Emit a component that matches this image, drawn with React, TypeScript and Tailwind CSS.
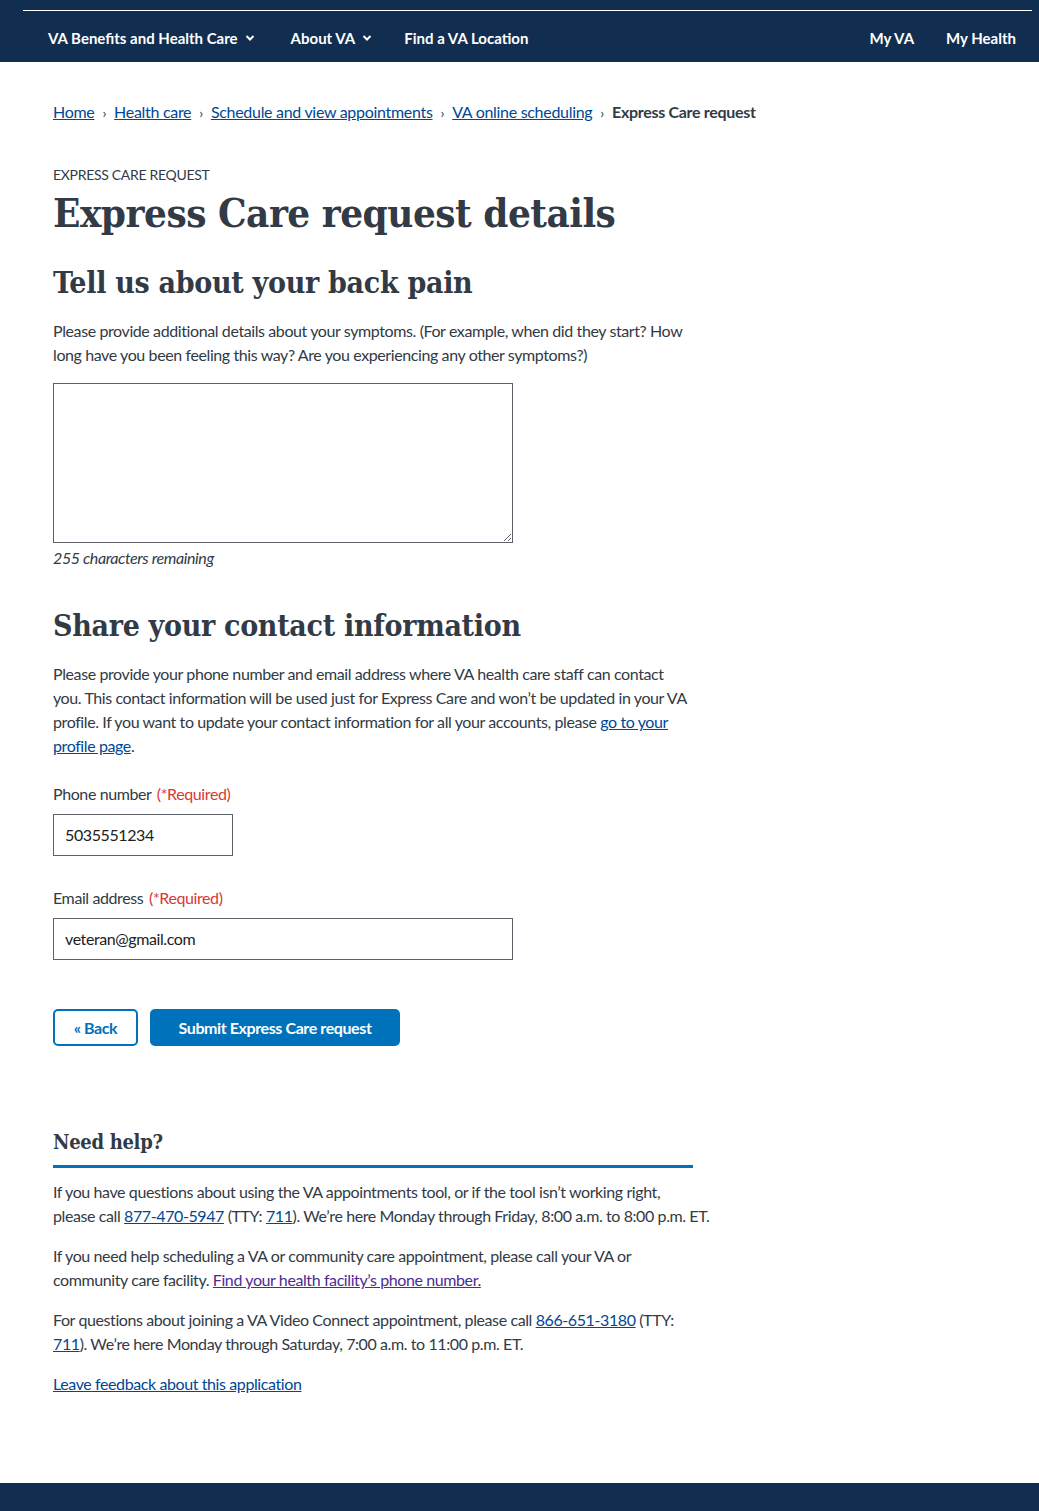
import React from "react";

function Chevron() {
  return (
    <svg width="10" height="8" viewBox="0 0 10 8" className="ml-[7px] inline-block">
      <path d="M1.5 2 L5 5.5 L8.5 2" stroke="white" strokeWidth="2" fill="none" />
    </svg>
  );
}

const serif = "font-bold font-['DejaVu_Serif_Condensed','DejaVu_Serif',serif]";

export default function App() {
  return (
    <div className="min-h-[1511px] flex flex-col bg-white text-[#323a45] font-['Lato','Liberation_Sans',sans-serif] tracking-[-0.4px]">
      <header className="bg-[#112e51] h-[62px] flex flex-col">
        <div className="ml-[23px] mr-[7px] mt-[10px] h-px bg-white shrink-0" />
        <nav className="flex items-center h-[51px] pt-[3px] text-white font-bold text-[15px] pl-[48px] pr-[23px] tracking-[0px]">
          <span className="flex items-center">VA Benefits and Health Care<Chevron /></span>
          <span className="flex items-center ml-[36px]">About VA<Chevron /></span>
          <span className="ml-[32px]">Find a VA Location</span>
          <span className="ml-auto">My VA</span>
          <span className="ml-[32px]">My Health</span>
        </nav>
      </header>

      <main className="flex-1 pl-[53px] pr-[20px] pt-[38px] pb-[40px]">
        <nav className="flex items-center text-[16px] h-[24px] tracking-[-0.3px]">
          <a className="text-[#004795] underline">Home</a>
          <span className="mx-[8px] text-[14px]">›</span>
          <a className="text-[#004795] underline">Health care</a>
          <span className="mx-[8px] text-[14px]">›</span>
          <a className="text-[#004795] underline">Schedule and view appointments</a>
          <span className="mx-[8px] text-[14px]">›</span>
          <a className="text-[#004795] underline">VA online scheduling</a>
          <span className="mx-[8px] text-[14px]">›</span>
          <span className="font-bold">Express Care request</span>
        </nav>

        <div className="w-[640px]">
          <p className="mt-[41px] text-[14px] leading-[20px] uppercase tracking-[-0.3px]">Express Care request</p>
          <h1 className={`mt-[4px] text-[40px] leading-[48px] tracking-[-0.5px] ${serif}`}>
            Express Care request details
          </h1>
          <h2 className={`mt-[26px] text-[30px] leading-[40px] tracking-[-0.3px] ${serif}`}>
            Tell us about your back pain
          </h2>
          <p className="mt-[16px] text-[16px] leading-[24px]">
            Please provide additional details about your symptoms. (For example, when did they start? How long have you been feeling this way? Are you experiencing any other symptoms?)
          </p>
          <textarea className="mt-[16px] block w-[460px] h-[160px] border border-[#5b616b] resize-y" />
          <p className="mt-[3px] italic text-[16px] leading-[24px]">255 characters remaining</p>

          <h2 className={`mt-[36px] text-[30px] leading-[40px] tracking-[-0.3px] ${serif}`}>
            Share your contact information
          </h2>
          <p className="mt-[16px] text-[16px] leading-[24px]">
            Please provide your phone number and email address where VA health care staff can contact you. This contact information will be used just for Express Care and won’t be updated in your VA profile. If you want to update your contact information for all your accounts, please{" "}
            <a className="text-[#004795] underline">go to your profile page</a>.
          </p>

          <label className="block mt-[24px] text-[16px] leading-[24px]">
            Phone number <span className="text-[#d83933] ml-[2px]">(*Required)</span>
          </label>
          <div className="mt-[8px] w-[180px] h-[42px] border border-[#5b616b] flex items-center px-[11px] text-[16px] text-[#212121]">
            5035551234
          </div>

          <label className="block mt-[30px] text-[16px] leading-[24px]">
            Email address <span className="text-[#d83933] ml-[2px]">(*Required)</span>
          </label>
          <div className="mt-[8px] w-[460px] h-[42px] border border-[#5b616b] flex items-center px-[11px] text-[16px] text-[#212121]">
            veteran@gmail.com
          </div>

          <div className="mt-[49px] flex gap-[12px]">
            <button className="w-[85px] h-[37px] border-2 border-[#0071bb] rounded-[5px] text-[#0071bb] font-bold text-[16px] bg-white">
              « Back
            </button>
            <button className="w-[250px] h-[37px] rounded-[5px] bg-[#0071bb] text-white font-bold text-[16px]">
              Submit Express Care request
            </button>
          </div>

          <h3 className={`mt-[82px] text-[20px] leading-[28px] tracking-[-0.3px] ${serif}`}>
            Need help?
          </h3>
          <div className="mt-[9px] h-[3px] bg-[#0071bb]" />
          <p className="mt-[12px] w-[670px] text-[16px] leading-[24px]">
            If you have questions about using the VA appointments tool, or if the tool isn’t working right,
            <br />
            please call <a className="text-[#004795] underline">877-470-5947</a> (TTY: <a className="text-[#004795] underline">711</a>). We’re here Monday through Friday, 8:00 a.m. to 8:00 p.m. ET.
          </p>
          <p className="mt-[16px] text-[16px] leading-[24px]">
            If you need help scheduling a VA or community care appointment, please call your VA or community care facility.{" "}
            <a className="text-[#4c2c92] underline">Find your health facility’s phone number.</a>
          </p>
          <p className="mt-[16px] text-[16px] leading-[24px]">
            For questions about joining a VA Video Connect appointment, please call{" "}
            <a className="text-[#004795] underline">866-651-3180</a> (TTY: <a className="text-[#004795] underline">711</a>). We’re here Monday through Saturday, 7:00 a.m. to 11:00 p.m. ET.
          </p>
          <p className="mt-[16px] text-[16px] leading-[24px]">
            <a className="text-[#004795] underline">Leave feedback about this application</a>
          </p>
        </div>
      </main>

      <footer className="bg-[#112e51] h-[28px]" />
    </div>
  );
}
